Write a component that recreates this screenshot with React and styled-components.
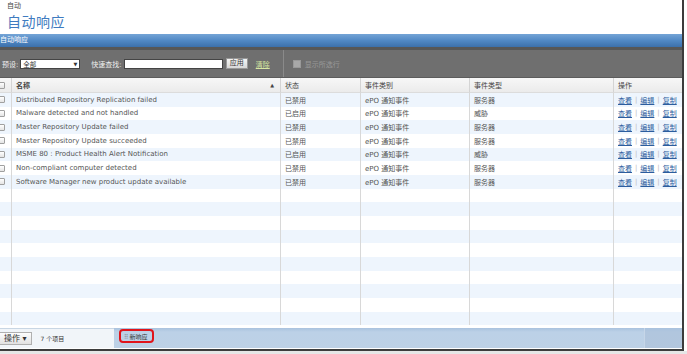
import React from "react";
import styled, { createGlobalStyle } from "styled-components";

const Global = createGlobalStyle`
  html, body { margin: 0; padding: 0; background: #fff; }
  body { font-family: "DejaVu Sans", "Noto Sans CJK SC", sans-serif; color: #555; }
  #root { width: 687px; height: 354px; overflow: hidden; }
`;

const Page = styled.div`
  width: 687px;
  height: 354px;
  display: flex;
  flex-direction: column;
  background: #fff;
`;

const Window = styled.div`
  width: 684px;
  height: 351px;
  box-sizing: border-box;
  border-right: 2px solid #3c3c3c;
  border-bottom: 2px solid #3c3c3c;
  display: flex;
  flex-direction: column;
  overflow: hidden;
`;

const BelowShadow = styled.div`
  height: 3px;
  background: #e6e6e6;
`;

const Head = styled.div`
  height: 34px;
  padding-left: 7px;
  display: flex;
  flex-direction: column;
`;

const Crumb = styled.div`
  font-size: 7px;
  line-height: 8px;
  margin-top: 2px;
  color: #444;
`;

const Title = styled.div`
  font-size: 14px;
  line-height: 16px;
  margin-top: 4px;
  color: #3f7bc0;
  letter-spacing: 0.5px;
`;

const BlueBar = styled.div`
  height: 13px;
  background: linear-gradient(#74a4d6, #5189c5 50%, #3c70ab);
  color: #fff;
  font-size: 7px;
  line-height: 13px;
  padding-left: 0;
`;

const Toolbar = styled.div`
  height: 31px;
  box-sizing: border-box;
  background: #6f6f6f;
  border-top: 3px solid #575757;
  border-bottom: 1px solid #5c5c5c;
  display: flex;
  align-items: center;
  padding-left: 2px;
  font-size: 7px;
  color: #eee;
`;

const Label = styled.span`
  margin-right: 2px;
  color: #f0f0f0;
`;

const Select = styled.div`
  width: 60px;
  height: 10px;
  box-sizing: border-box;
  background: #fff;
  border: 1px solid #444;
  color: #333;
  display: flex;
  justify-content: space-between;
  align-items: center;
  padding: 0 2px;
  margin-right: 11px;
  font-size: 6.5px;
`;

const Input = styled.div`
  width: 99px;
  height: 10px;
  box-sizing: border-box;
  background: #fff;
  border: 1px solid #444;
  margin-right: 3px;
`;

const Btn = styled.div`
  height: 11px;
  box-sizing: border-box;
  padding: 0 3px;
  background: linear-gradient(#f4f4f4, #d8d8d8);
  border: 1px solid #999;
  color: #333;
  font-size: 7px;
  line-height: 9px;
  margin-right: 8px;
`;

const ClearLink = styled.span`
  color: #d7e6a2;
  text-decoration: underline;
  margin-right: 13px;
`;

const Sep = styled.div`
  align-self: stretch;
  width: 1px;
  background: #8a8a8a;
  margin-right: 9px;
`;

const DisabledBox = styled.span`
  width: 6px;
  height: 6px;
  background: #a8a8a8;
  border: 1px solid #999;
  margin-right: 4px;
`;

const Muted = styled.span`
  color: #999;
`;

const Grid = styled.div`
  display: grid;
  grid-template-columns: 11px 269px 80px 109px 144px 1fr;
  font-size: 7px;
`;

const HeadCell = styled.div`
  height: 15px;
  box-sizing: border-box;
  background: linear-gradient(#f7f7f7, #ebebeb);
  border-bottom: 1px solid #dcdcdc;
  border-left: ${(p) => (p.first ? "none" : "1px solid #d4d4d4")};
  padding-left: 4px;
  display: flex;
  align-items: center;
  justify-content: space-between;
  padding-right: 6px;
  color: #444;
  font-weight: ${(p) => (p.bold ? "bold" : "normal")};
  white-space: nowrap;
`;

const Cell = styled.div`
  height: 13.67px;
  box-sizing: border-box;
  background: ${(p) => (p.alt ? "#eef5fd" : "#fff")};
  border-left: ${(p) => (p.first ? "none" : "1px solid #d8d8d8")};
  padding-left: 4px;
  display: flex;
  align-items: center;
  white-space: nowrap;
  overflow: hidden;
  color: #555;
`;

const Check = styled.span`
  width: 7px;
  height: 7px;
  box-sizing: border-box;
  border: 1px solid #a0a0a0;
  border-radius: 1px;
  background: linear-gradient(#fff, #e4e4e4);
  margin-left: -6px;
`;

const Link = styled.a`
  color: #2c5d9e;
  text-decoration: underline;
`;

const Pipe = styled.span`
  color: #bbb;
  margin: 0 3px;
`;

const Spacer = styled.div`
  height: 3px;
`;

const BottomBar = styled.div`
  height: 20px;
  display: flex;
  background: linear-gradient(#a9c2de, #bcd1e7 20%, #bdd1e6);
  font-size: 6.5px;
`;

const BottomLeft = styled.div`
  width: 114px;
  display: flex;
  align-items: center;
  background: #f1f5f9;
  border-top: 1px solid #c8d6e4;
  box-sizing: border-box;
`;

const ActionBtn = styled.div`
  height: 13px;
  box-sizing: border-box;
  padding: 0 4px 0 4px;
  border: 1px solid #b0b0b0;
  border-left: none;
  background: linear-gradient(#fdfdfd, #e2e2e2);
  color: #333;
  font-size: 8px;
  line-height: 11px;
  margin-right: 9px;
`;

const Count = styled.span`
  color: #333;
  font-size: 6px;
`;

const NewArea = styled.div`
  flex: 1;
  display: flex;
  align-items: flex-start;
  padding-left: 5px;
  padding-top: 1px;
`;

const Highlight = styled.div`
  width: 35px;
  height: 14px;
  box-sizing: border-box;
  border: 2px solid #e0141b;
  border-radius: 4px;
  display: flex;
  align-items: center;
  padding-left: 3px;
  gap: 2px;
  color: #333;
  font-size: 6px;
`;

const Grip = styled.span`
  color: #777;
  font-size: 6px;
  letter-spacing: -1px;
`;

const RightTab = styled.div`
  width: 37px;
  background: linear-gradient(#a9c2de, #b1c6de 20%, #b2c6dd);
  border-left: 1px solid #c6d6e8;
`;

const rows = [
  ["Distributed Repository Replication failed", "已禁用", "服务器"],
  ["Malware detected and not handled", "已启用", "威胁"],
  ["Master Repository Update failed", "已禁用", "服务器"],
  ["Master Repository Update succeeded", "已禁用", "服务器"],
  ["MSME 80 : Product Health Alert Notification", "已启用", "威胁"],
  ["Non-compliant computer detected", "已禁用", "服务器"],
  ["Software Manager new product update available", "已禁用", "服务器"],
];

export default function App() {
  const all = [...rows, ...Array.from({ length: 10 }, () => null)];
  return (
    <Page>
      <Global />
      <Window>
        <Head>
          <Crumb>自动</Crumb>
          <Title>自动响应</Title>
        </Head>
        <BlueBar>自动响应</BlueBar>
        <Toolbar>
          <Label>预设:</Label>
          <Select>
            <span>全部</span>
            <span style={{ fontSize: "5px" }}>▼</span>
          </Select>
          <Label>快速查找:</Label>
          <Input />
          <Btn>应用</Btn>
          <ClearLink>清除</ClearLink>
          <Sep />
          <DisabledBox />
          <Muted>显示所选行</Muted>
        </Toolbar>
        <Grid>
          <HeadCell first>
            <Check />
          </HeadCell>
          <HeadCell bold>
            <span>名称</span>
            <span style={{ fontSize: "5px", fontWeight: "normal" }}>▲</span>
          </HeadCell>
          <HeadCell>状态</HeadCell>
          <HeadCell>事件类别</HeadCell>
          <HeadCell>事件类型</HeadCell>
          <HeadCell>操作</HeadCell>
          {all.map((r, i) => {
            const alt = i % 2 === 0;
            return (
              <React.Fragment key={i}>
                <Cell first alt={alt}>{r && <Check />}</Cell>
                <Cell alt={alt}>{r ? r[0] : ""}</Cell>
                <Cell alt={alt}>{r ? r[1] : ""}</Cell>
                <Cell alt={alt}>{r ? "ePO 通知事件" : ""}</Cell>
                <Cell alt={alt}>{r ? r[2] : ""}</Cell>
                <Cell alt={alt}>
                  {r && (
                    <>
                      <Link>查看</Link>
                      <Pipe>|</Pipe>
                      <Link>编辑</Link>
                      <Pipe>|</Pipe>
                      <Link>复制</Link>
                    </>
                  )}
                </Cell>
              </React.Fragment>
            );
          })}
        </Grid>
        <Spacer />
        <BottomBar>
          <BottomLeft>
            <ActionBtn>操作 ▾</ActionBtn>
            <Count>7 个项目</Count>
          </BottomLeft>
          <NewArea>
            <Highlight>
              <Grip>⠿</Grip>
              <span>新响应</span>
            </Highlight>
          </NewArea>
          <RightTab />
        </BottomBar>
      </Window>
      <BelowShadow />
    </Page>
  );
}
